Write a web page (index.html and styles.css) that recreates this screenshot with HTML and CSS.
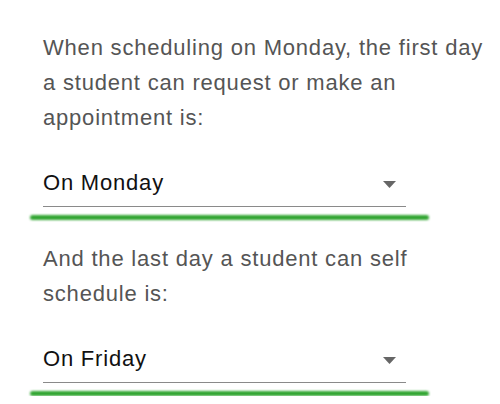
FILE: index.html
```html
<!DOCTYPE html>
<html>
<head>
	<meta charset="UTF-8">
	<title>Scheduling Window</title>
	<link rel="stylesheet" href="styles.css">
</head>
<body>
	<form class="window-form">
		<p class="question">When scheduling on Monday, the first day a student can request or make an appointment is:</p>
		<label class="field">
			<select id="first-day">
				<option value="MON" selected>On Monday</option>
				<option value="TUE">On Tuesday</option>
				<option value="WED">On Wednesday</option>
				<option value="THU">On Thursday</option>
				<option value="FRI">On Friday</option>
			</select>
			<svg class="caret" width="13" height="7" viewBox="0 0 13 7"><path d="M0 0H13L6.5 7Z"/></svg>
		</label>
		<div class="focus-bar"></div>

		<p class="question">And the last day a student can self schedule is:</p>
		<label class="field">
			<select id="last-day">
				<option value="MON">On Monday</option>
				<option value="TUE">On Tuesday</option>
				<option value="WED">On Wednesday</option>
				<option value="THU">On Thursday</option>
				<option value="FRI" selected>On Friday</option>
			</select>
			<svg class="caret" width="13" height="7" viewBox="0 0 13 7"><path d="M0 0H13L6.5 7Z"/></svg>
		</label>
		<div class="focus-bar"></div>
	</form>
</body>
</html>
```

FILE: styles.css
```css
body {
	margin: 0;
	padding: 0;
	background-color: #ffffff;
	font-family: "Liberation Sans", Arial, sans-serif;
}

.window-form {
	padding: 0 0 0 43px;
	width: 445px;
}

.question {
	margin: 0;
	padding-top: 30px;
	font-size: 22px;
	line-height: 35px;
	letter-spacing: 0.8px;
	color: #555555;
}

.focus-bar + .question {
	padding-top: 21px;
}

.field {
	display: flex;
	align-items: center;
	width: 363px;
	margin-top: 33px;
	padding-bottom: 8px;
	border-bottom: 1px solid #8a8a8a;
}

.field select {
	flex: 1;
	appearance: none;
	-webkit-appearance: none;
	border: none;
	outline: none;
	background: transparent;
	margin: 0;
	padding: 0;
	height: 30px;
	font-family: inherit;
	font-size: 22px;
	line-height: 30px;
	letter-spacing: 0.8px;
	color: #111111;
}

.caret {
	margin-right: 10px;
	margin-top: 3px;
	fill: #666666;
}

.focus-bar {
	width: 399px;
	height: 5px;
	margin: 8px 0 0 -13px;
	border-radius: 3px;
	background-color: #33a633;
	filter: blur(0.9px);
}
```
